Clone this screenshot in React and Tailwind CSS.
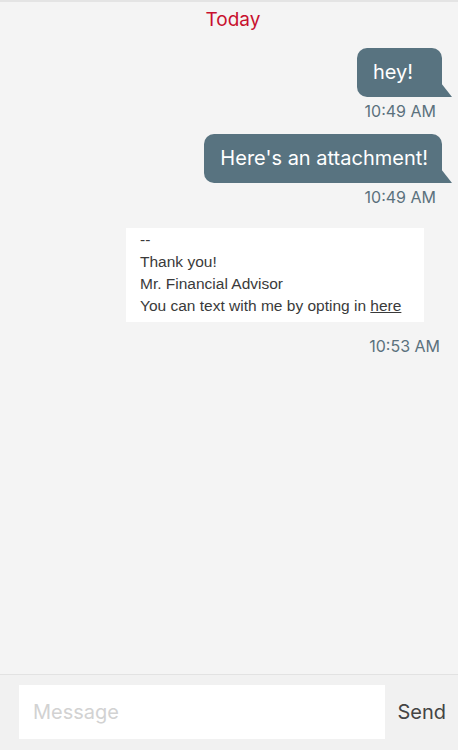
import React from "react";

const font = { fontFamily: '"Inter", "Liberation Sans", sans-serif' };

function Bubble({ text }) {
  return (
    <div className="relative mr-4">
      <div className="bg-[#587380] text-white text-[20px] leading-[49px] h-[49px] min-w-[85px] pl-[16px] pr-[14px] rounded-[10px] rounded-br-none">
        {text}
      </div>
      {/* tail */}
      <svg className="absolute right-[-10px] bottom-0" width="11" height="14" viewBox="0 0 11 14">
        <polygon points="0,0 11,14 0,14" fill="#587380" />
      </svg>
    </div>
  );
}

function Time({ children, className = "" }) {
  return <div className={`text-[16px] text-[#5b717d] ${className}`}>{children}</div>;
}

export default function App() {
  return (
    <div className="w-[458px] h-[750px] flex flex-col bg-[#f4f4f4]" style={font}>
      {/* Messages */}
      <div className="flex-1 flex flex-col border-t-2 border-[#e4e4e4]">
        <div className="text-center text-[19px] text-[#c8102e] mt-[6px] leading-[24px] pl-[8px]">Today</div>

        <div className="flex flex-col items-end mt-[16px]">
          <Bubble text="hey!" />
          <Time className="mr-[22px] mt-[4px] leading-[20px]">10:49 AM</Time>
        </div>

        <div className="flex flex-col items-end mt-[13px]">
          <Bubble text="Here's an attachment!" />
          <Time className="mr-[22px] mt-[4px] leading-[20px]">10:49 AM</Time>
        </div>

        <div className="flex flex-col items-end mt-[21px]">
          <div
            className="w-[298px] mr-[34px] bg-white px-[14px] pt-[1px] pb-[5px] text-[15.5px] leading-[22px] text-[#3a3a3a]"
            style={{ fontFamily: '"Liberation Sans", Arial, sans-serif' }}
          >
            <div>--</div>
            <div>Thank you!</div>
            <div>Mr. Financial Advisor</div>
            <div>
              You can text with me by opting in <span className="underline">here</span>
            </div>
          </div>
          <Time className="mr-[18px] mt-[14px] leading-[20px]">10:53 AM</Time>
        </div>
      </div>

      {/* Composer */}
      <div className="h-[76px] border-t border-[#e2e2e2] bg-[#f1f1f1] flex items-start pt-[10px] pl-[19px] pr-[12px]">
        <div className="w-[366px] h-[54px] bg-white flex items-center px-[14px]">
          <span className="text-[20px] text-[#d2d2d2]">Message</span>
        </div>
        <div className="flex-1 h-[54px] flex items-center justify-end text-[20px] text-[#444]">Send</div>
      </div>
    </div>
  );
}
